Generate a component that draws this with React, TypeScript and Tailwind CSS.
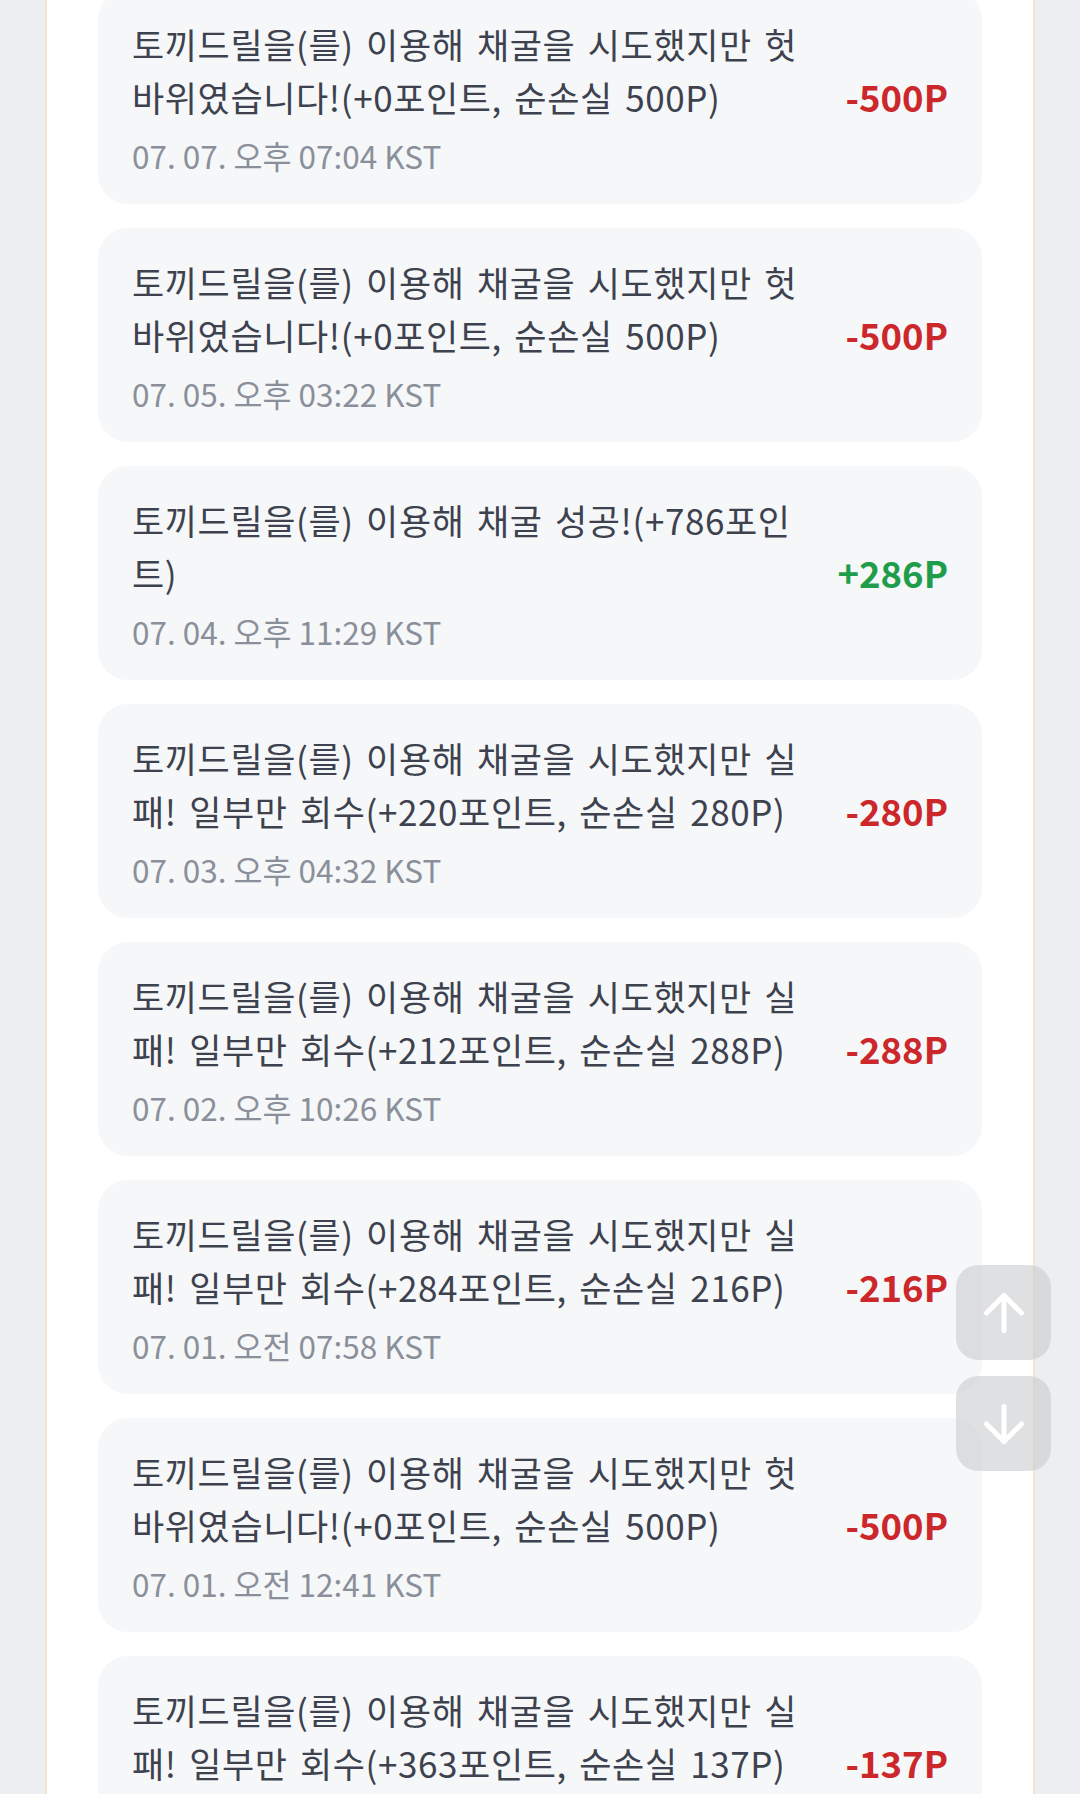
import React from 'react';
import { ArrowUp, ArrowDown } from 'lucide-react';

interface LogItem {
    message: string;
    amount: number;
    date: string;
}

const FAIL_ROCK = '토끼드릴을(를) 이용해 채굴을 시도했지만 헛바위였습니다!(+0포인트, 순손실 500P)';
const partial = (got: number) =>
    `토끼드릴을(를) 이용해 채굴을 시도했지만 실패! 일부만 회수(+${got}포인트, 순손실 ${500 - got}P)`;

const logs: LogItem[] = [
    { message: FAIL_ROCK, amount: -500, date: '07. 07. 오후 07:04 KST' },
    { message: FAIL_ROCK, amount: -500, date: '07. 05. 오후 03:22 KST' },
    { message: '토끼드릴을(를) 이용해 채굴 성공!(+786포인트)', amount: 286, date: '07. 04. 오후 11:29 KST' },
    { message: partial(220), amount: -280, date: '07. 03. 오후 04:32 KST' },
    { message: partial(212), amount: -288, date: '07. 02. 오후 10:26 KST' },
    { message: partial(284), amount: -216, date: '07. 01. 오전 07:58 KST' },
    { message: FAIL_ROCK, amount: -500, date: '07. 01. 오전 12:41 KST' },
    { message: partial(363), amount: -137, date: '06. 30. 오후 09:15 KST' },
];

function LogCard({ item }: { item: LogItem }) {
    const positive = item.amount > 0;
    return (
        <div className="bg-[#f6f7f9] rounded-[30px] pl-[34px] pr-[34px] pt-[28px] pb-[28px] flex items-center justify-between">
            <div className="w-[680px]">
                <p className="text-[35px] leading-[52.5px] tracking-[0.6px] [word-spacing:4px] text-[#3d424e]">
                    {item.message}
                </p>
                <p className="mt-[11px] text-[31.5px] leading-[42px] text-[#8a909a]">{item.date}</p>
            </div>
            <div className={`text-[36.5px] font-bold leading-none ${positive ? 'text-[#1f9d4b]' : 'text-[#cc272b]'}`}>
                {positive ? '+' : ''}{item.amount}P
            </div>
        </div>
    );
}

export default function App() {
    return (
        <div
            className="relative h-screen w-full overflow-hidden bg-[#eceef2] px-[45px]"
            style={{ fontFamily: '"Noto Sans CJK KR", "Noto Sans", sans-serif' }}
        >
            {/* Main panel (flex so the list's negative margin doesn't collapse through) */}
            <div className="h-full flex flex-col bg-white border-x-2 border-[#f3e6cf] px-[51px]">
                <div className="-mt-[10px] flex flex-col gap-[24px]">
                    {logs.map((item, idx) => (
                        <LogCard key={idx} item={item} />
                    ))}
                </div>
            </div>

            {/* Scroll buttons */}
            <div className="absolute left-[956px] top-[1265px] flex flex-col gap-[16px]">
                <button className="w-[95px] h-[95px] rounded-[22px] bg-[#c9cbcf]/60 flex items-center justify-center text-white">
                    <ArrowUp size={60} strokeWidth={2} />
                </button>
                <button className="w-[95px] h-[95px] rounded-[22px] bg-[#c9cbcf]/60 flex items-center justify-center text-white">
                    <ArrowDown size={60} strokeWidth={2} />
                </button>
            </div>
        </div>
    );
}
